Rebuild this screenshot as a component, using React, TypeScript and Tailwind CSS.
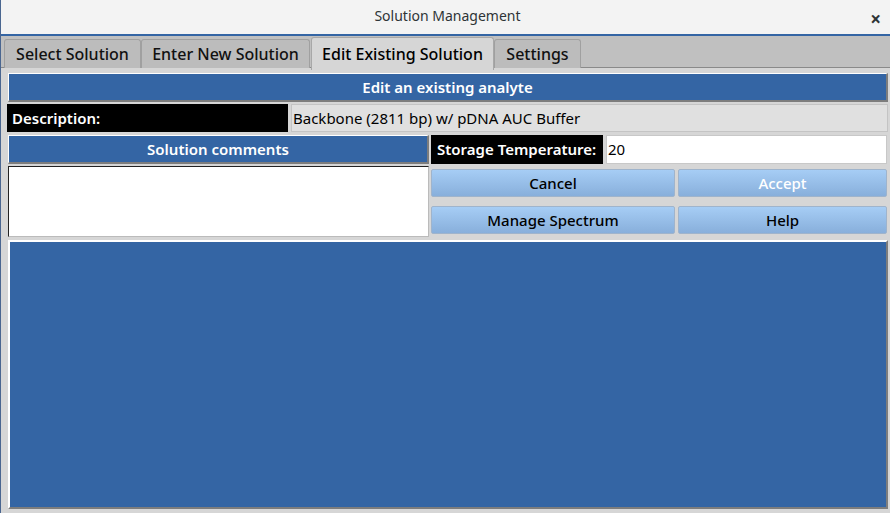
import React from "react";

const font = { fontFamily: '"Noto Sans", "Open Sans", "DejaVu Sans", sans-serif' };

function Tab({ label, active, className }: { label: string; active?: boolean; className?: string }) {
  if (active) {
    return (
      <div className={"h-[33px] mt-[1px] flex items-center justify-center bg-[#d6d6d6] border border-[#a8a8a8] border-b-0 rounded-t-[3px] text-[16px] text-black font-medium -mb-[1px] z-10 " + (className ?? "")}>
        {label}
      </div>
    );
  }
  return (
    <div className={"h-[29px] mt-[3px] flex items-center justify-center bg-[#bcbcbc] border border-[#a0a0a0] border-b-0 rounded-t-[3px] text-[16px] text-[#111] font-medium " + (className ?? "")}>
      {label}
    </div>
  );
}

function BlueHeader({ text, className }: { text: string; className?: string }) {
  return (
    <div
      className={
        "flex items-center justify-center bg-[#3465a4] text-white font-semibold text-[15px] border-t border-l border-t-white border-l-white border-b-2 border-r-2 border-b-[#7d7d7d] border-r-[#7d7d7d] " +
        (className ?? "")
      }
    >
      {text}
    </div>
  );
}

function Btn({ label, dim, className }: { label: string; dim?: boolean; className?: string }) {
  return (
    <div
      className={
        "h-[28px] flex items-center justify-center rounded-[2px] border border-[#9fb4cc] bg-gradient-to-b from-[#a6cdf5] to-[#88afdb] text-[15px] font-medium " +
        (dim ? "text-white " : "text-black ") +
        (className ?? "")
      }
    >
      {label}
    </div>
  );
}

export default function App() {
  return (
    <div className="w-[890px] h-[513px] overflow-hidden flex flex-col bg-[#f3f3f3] border-l border-l-[#4a6690]" style={font}>
      {/* Title bar */}
      <div className="h-[34px] flex items-center justify-center relative text-[14px] text-[#2e3436]">
        <span className="mt-[-3px] ml-[4px]">Solution Management</span>
        <span className="absolute right-[9px] top-[5px] text-[19px] font-bold text-[#2e3436]">×</span>
      </div>
      <div className="h-[2px] bg-[#3465a4]" />
      {/* Tab bar */}
      <div className="h-[32px] bg-[#c0c0c0] flex items-start pl-[3px] border-b border-b-[#8a8a8a]">
        <Tab label="Select Solution" className="w-[137px]" />
        <Tab label="Enter New Solution" className="w-[169px]" />
        <Tab label="Edit Existing Solution" active className="w-[183px] ml-[1px]" />
        <Tab label="Settings" className="w-[87px]" />
      </div>
      {/* Content */}
      <div className="flex-1 bg-[#d6d6d6] flex flex-col pl-[6px] pr-[2px] pt-[4px] pb-[4px] gap-[2px]">
        <BlueHeader text="Edit an existing analyte" className="h-[29px] ml-[1px] mt-[1px]" />
        <div className="flex h-[28px] gap-[3px]">
          <div className="w-[281px] bg-black text-white font-semibold text-[15px] flex items-center pl-[5px]">
            Description:
          </div>
          <div className="flex-1 bg-[#e0e0e0] border border-[#c4c4c4] flex items-center pl-[1px] text-[15px] text-black">
            Backbone (2811 bp) w/ pDNA AUC Buffer
          </div>
        </div>
        <div className="flex gap-[2px] mt-[1px]">
          <div className="w-[421px] flex flex-col gap-[2px] ml-[1px]">
            <BlueHeader text="Solution comments" className="h-[29px]" />
            <div className="h-[71px] bg-white border border-[#222] border-b-[#bbb] border-r-[#bbb]" />
          </div>
          <div className="flex-1 flex flex-col">
            <div className="flex h-[29px] gap-[3px] mr-[1px]">
              <div className="w-[172px] bg-black text-white font-semibold text-[15px] flex items-center pl-[6px]">
                Storage Temperature:
              </div>
              <div className="flex-1 bg-white border border-[#c8c8c8] flex items-center pl-[1px] text-[15px] text-black">
                20
              </div>
            </div>
            <div className="flex gap-[3px] mt-[5px] mr-[1px]">
              <Btn label="Cancel" className="w-[244px]" />
              <Btn label="Accept" dim className="flex-1" />
            </div>
            <div className="flex gap-[3px] mt-[9px] mr-[1px]">
              <Btn label="Manage Spectrum" className="w-[244px]" />
              <Btn label="Help" className="flex-1" />
            </div>
          </div>
        </div>
        <div className="flex-1 mt-[1px] ml-[1px] bg-[#3465a4] border-t-2 border-l-2 border-t-white border-l-white border-b-2 border-r-2 border-b-[#7d7d7d] border-r-[#7d7d7d]" />
      </div>
    </div>
  );
}
